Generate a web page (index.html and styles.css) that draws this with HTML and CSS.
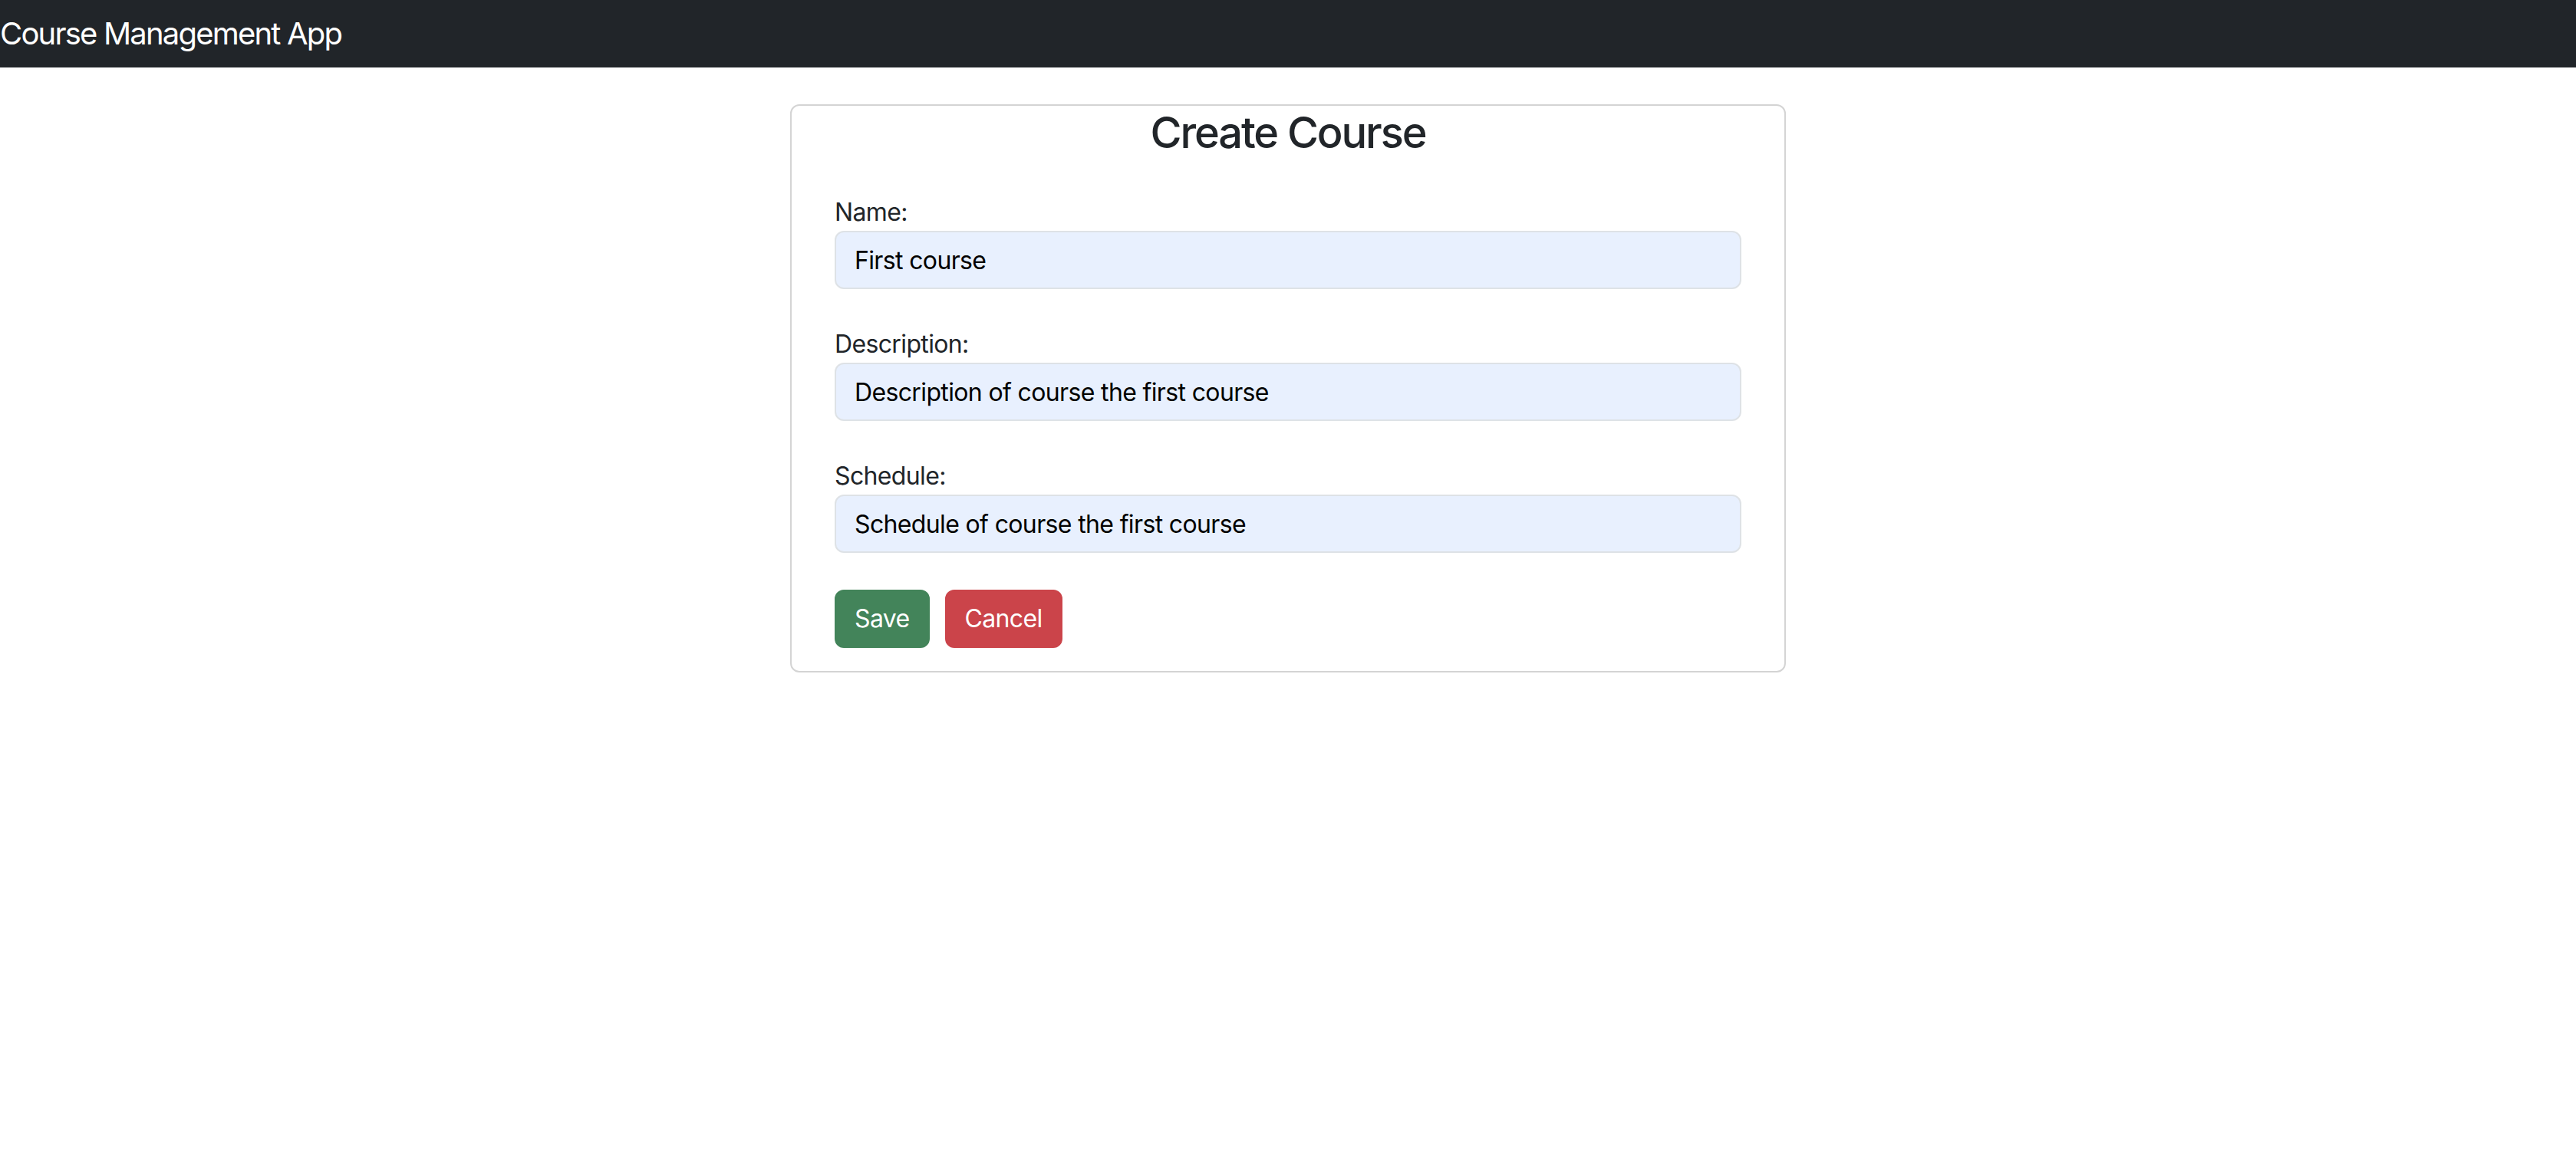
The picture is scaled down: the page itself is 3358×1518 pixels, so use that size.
FILE: index.html
```html
<!DOCTYPE html>
<html lang="en">
<head>
<meta charset="utf-8">
<title>Course Management App</title>
<link rel="stylesheet" href="styles.css">
</head>
<body>
<nav class="navbar">
  <span class="brand">Course Management App</span>
</nav>
<main class="page">
  <section class="card">
    <h3 class="card-title">Create Course</h3>
    <div class="card-body">
      <form class="form">
        <div class="group">
          <label class="label" for="name">Name:</label>
          <input class="input" id="name" type="text" value="First course">
        </div>
        <div class="group">
          <label class="label" for="desc">Description:</label>
          <input class="input" id="desc" type="text" value="Description of course the first course">
        </div>
        <div class="group">
          <label class="label" for="sched">Schedule:</label>
          <input class="input" id="sched" type="text" value="Schedule of course the first course">
        </div>
        <div class="actions">
          <button type="button" class="btn btn-save">Save</button>
          <button type="button" class="btn btn-cancel">Cancel</button>
        </div>
      </form>
    </div>
  </section>
</main>
</body>
</html>
```
FILE: styles.css
```css
* { box-sizing: border-box; }
html, body { margin: 0; padding: 0; }
body {
  font-family: Inter, "Noto Sans", "Liberation Sans", sans-serif;
  font-size: 32px;
  line-height: 1.5;
  letter-spacing: -0.02em;
  color: #212529;
  background: #ffffff;
}
.navbar {
  background: #212529;
  height: 88px;
  display: flex;
  align-items: center;
  padding: 0;
}
.brand {
  color: #ffffff;
  font-size: 40px;
  line-height: 60px;
  letter-spacing: -0.045em;
}
.page {
  display: flex;
  justify-content: center;
  padding-top: 48px;
}
.card {
  width: 1298px;
  border: 2px solid #d4d4d4;
  border-radius: 12px;
  background: #fff;
}
.card-title {
  margin: 0 0 16px;
  padding-top: 2px;
  text-align: center;
  font-size: 56px;
  font-weight: 500;
  line-height: 1.2;
  letter-spacing: -0.038em;
}
.card-body {
  padding: 30px 56px 30px;
}
.form { margin: 0; }
.group {
  display: flex;
  flex-direction: column;
  margin-bottom: 48px;
}
.label {
  display: block;
  font-size: 32px;
  line-height: 48px;
}
.input {
  display: block;
  width: 100%;
  height: 76px;
  padding: 12px 24px;
  font-family: inherit;
  font-size: 32px;
  line-height: 48px;
  letter-spacing: -0.02em;
  color: #000;
  background: #e8f0fe;
  border: 2px solid #dee2e6;
  border-radius: 12px;
  outline: none;
}
.actions {
  display: flex;
  gap: 20px;
}
.btn {
  height: 76px;
  padding: 12px 24px;
  font-family: inherit;
  font-size: 32px;
  line-height: 48px;
  letter-spacing: -0.02em;
  color: #fff;
  border: 2px solid transparent;
  border-radius: 12px;
}
.btn-save { background: #43845a; border-color: #43845a; }
.btn-cancel { background: #cb444a; border-color: #cb444a; }
```
